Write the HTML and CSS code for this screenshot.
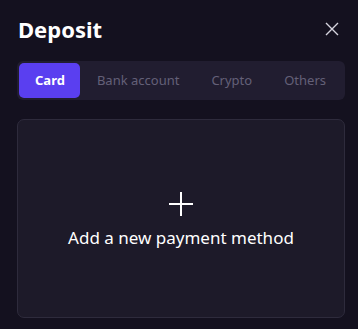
FILE: index.html
```html
<!DOCTYPE html>
<html>
<head>
<meta charset="utf-8">
<link rel="stylesheet" href="styles.css">
</head>
<body>
<div class="modal">
  <div class="header">
    <h1 class="title">Deposit</h1>
    <button class="close" aria-label="Close">
      <svg width="14" height="14" viewBox="0 0 14 14"><path d="M1 1L13 13M13 1L1 13" stroke="#d6d4de" stroke-width="1.4" fill="none"/></svg>
    </button>
  </div>
  <div class="tabs">
    <div class="tab active">Card</div>
    <div class="tab">Bank account</div>
    <div class="tab">Crypto</div>
    <div class="tab">Others</div>
  </div>
  <div class="add-card">
    <svg class="plus" width="26" height="26" viewBox="0 0 26 26"><path d="M13 1V25M1 13H25" stroke="#ffffff" stroke-width="2" fill="none"/></svg>
    <div class="add-text">Add a new payment method</div>
  </div>
</div>
</body>
</html>
```
FILE: styles.css
```css
html, body {
  margin: 0;
  padding: 0;
  background: #14111f;
  width: 358px;
  height: 329px;
  overflow: hidden;
  font-family: "Noto Sans", "Open Sans", sans-serif;
}
.modal {
  padding: 14px 14px 0 17px;
}
.header {
  display: flex;
  align-items: center;
  justify-content: space-between;
  height: 30px;
}
.title {
  margin: 0 0 0 1px;
  font-size: 22px;
  font-weight: 700;
  line-height: 30px;
  color: #ffffff;
}
.close {
  background: none;
  border: 0;
  padding: 0;
  margin-right: 5px;
  width: 14px;
  height: 14px;
  display: flex;
}
.tabs {
  margin-top: 17px;
  display: flex;
  background: #211d30;
  border-radius: 6px;
  padding: 2px;
  height: 35px;
  width: 324px;
}
.tab {
  padding: 0 15px 0 17px;
  font-size: 13px;
  line-height: 35px;
  color: #646078;
  white-space: nowrap;
}
.tab.active {
  background: #5a3ff0;
  color: #ffffff;
  font-weight: 700;
  border-radius: 5px;
  padding: 0 15px 0 16px;
}
.add-card {
  margin-top: 19px;
  width: 326px;
  height: 195px;
  border: 1px solid #2e2b3c;
  border-radius: 7px;
  background: #1d1a29;
  display: flex;
  flex-direction: column;
  align-items: center;
  justify-content: center;
  gap: 10px;
  padding-top: 2px;
  box-sizing: content-box;
}
.add-text {
  font-size: 17px;
  line-height: 22px;
  color: #ffffff;
}
```
